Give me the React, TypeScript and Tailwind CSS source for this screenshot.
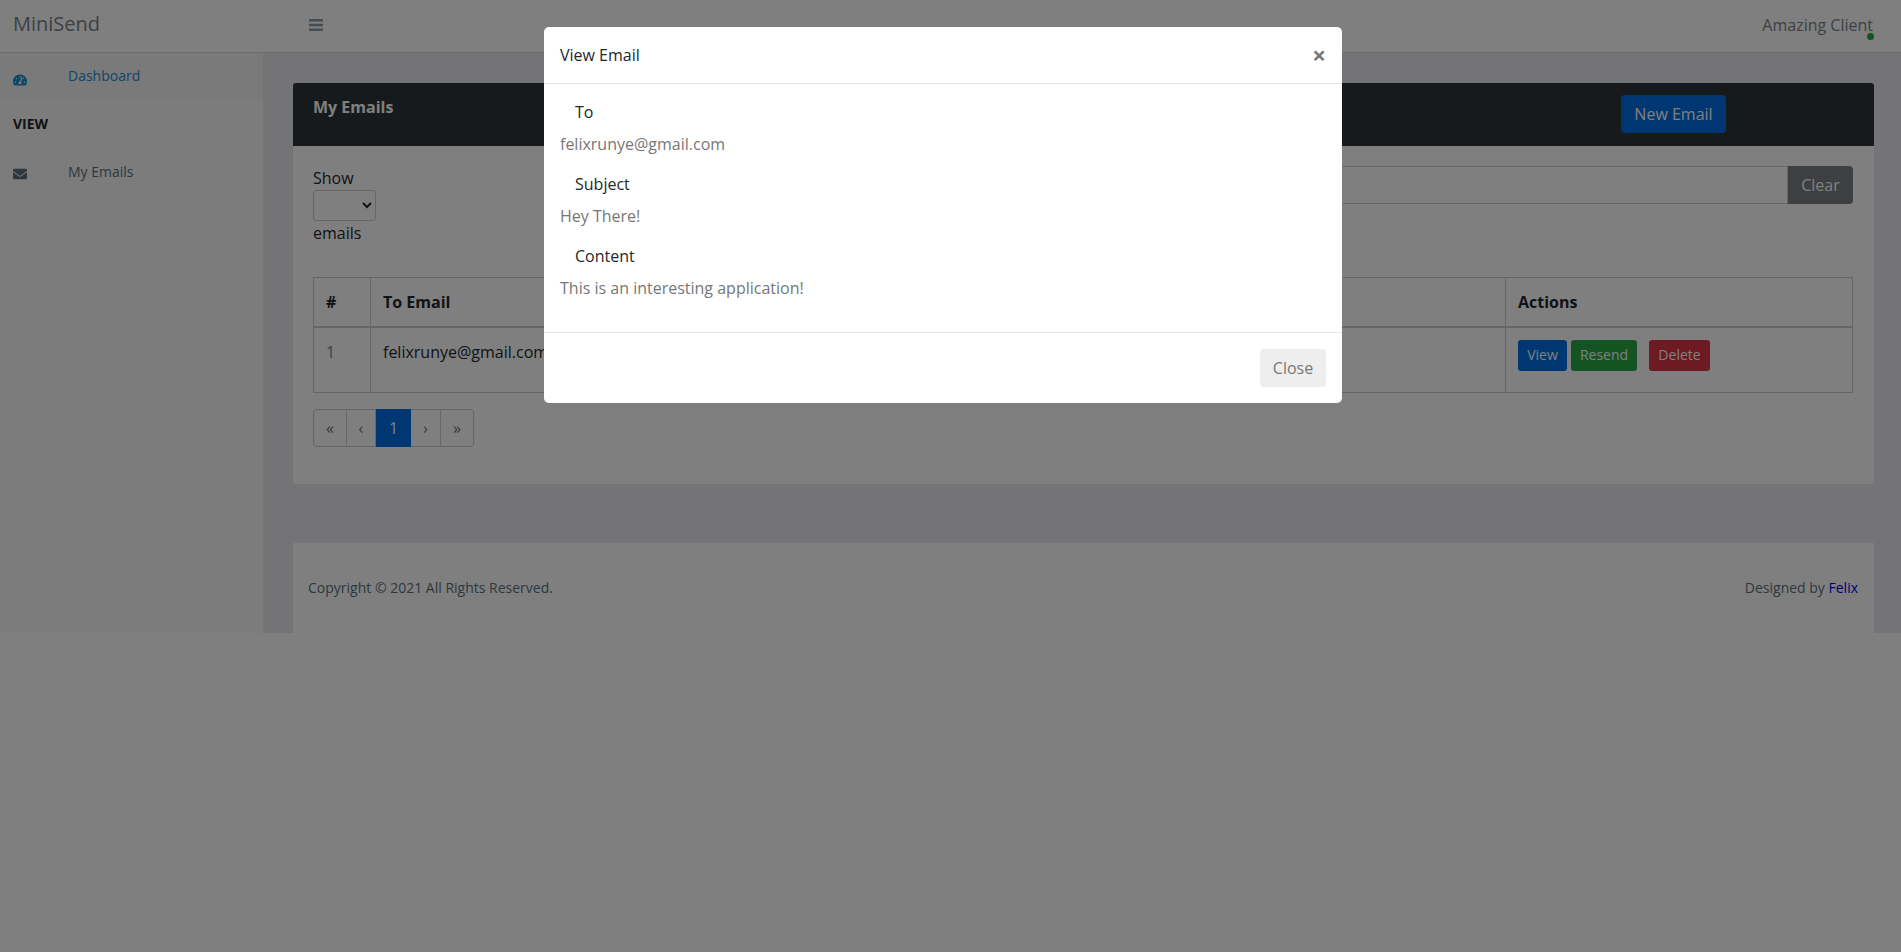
import { FaEnvelope, FaTachometerAlt } from 'react-icons/fa';

function Header() {
  return (
    <header className="flex h-[53px] items-start border-b border-[#d8dbe0] bg-white">
      <div className="mt-[10px] w-[263px] pl-[13px] text-xl text-[#7b8288]">MiniSend</div>
      <button className="mt-[19px] ml-[46px] text-[#8b98a5]">
        <svg width="14" height="12" viewBox="0 0 14 12" fill="currentColor">
          <rect y="0" width="14" height="2.4" rx="0.5" />
          <rect y="4.8" width="14" height="2.4" rx="0.5" />
          <rect y="9.6" width="14" height="2.4" rx="0.5" />
        </svg>
      </button>
      <div className="relative mt-[13px] ml-auto pr-[28px] text-base text-[#7b8288]">
        Amazing Client
        <span className="absolute top-[20px] right-[27px] h-[7px] w-[7px] rounded-full bg-[#28a745]"></span>
      </div>
    </header>
  );
}

function Sidebar() {
  return (
    <aside className="flex w-[263px] shrink-0 flex-col bg-[#f8f8f8] text-sm text-[#5c7080]">
      <div className="flex h-[46px] bg-[#f4f4f4] pl-[13px] text-[#1a8ccf]">
        <FaTachometerAlt size={14} className="mt-[20px]" />
        <span className="mt-[13px] ml-[41px]">Dashboard</span>
      </div>
      <div className="mt-[15px] pl-[13px] leading-5 font-bold text-[#23282c]">VIEW</div>
      <div className="mt-[28px] flex pl-[13px]">
        <FaEnvelope size={14} className="mt-[5px]" />
        <span className="ml-[41px]">My Emails</span>
      </div>
    </aside>
  );
}

function EmailsCard() {
  return (
    <section className="h-[401px] rounded-[3px] bg-white">
      <div className="flex h-[63px] rounded-t-[3px] bg-[#2f353a] pr-[148px] pl-[20px] text-white">
        <h2 className="mt-[12px] font-bold">My Emails</h2>
        <button className="mt-[12px] ml-auto h-[38px] w-[105px] rounded-[4px] bg-[#006fe6]">New Email</button>
      </div>
      <div className="pt-[20px] pr-[21px] pl-[20px]">
        <div className="flex h-[79px] justify-between">
          <div className="flex flex-col items-start">
            <span>Show</span>
            <select className="h-[31px] w-[63px] rounded-[3px] border border-[#c8ced3] bg-white"></select>
            <span>emails</span>
          </div>
          <div className="flex h-[38px] w-[900px]">
            <input className="flex-1 border border-[#c8ced3]" />
            <button className="w-[65px] rounded-r-[4px] bg-[#7d7e82] text-white">Clear</button>
          </div>
        </div>
        <table className="mt-[32px] w-full table-fixed border-collapse border border-[#c8ced3]">
          <colgroup>
            <col className="w-[57px]" />
            <col />
            <col className="w-[347px]" />
          </colgroup>
          <thead>
            <tr className="h-[49px] border-b-2 border-[#c8ced3] text-left">
              <th className="border-r border-[#c8ced3] px-[12px]">#</th>
              <th className="border-r border-[#c8ced3] px-[12px]">To Email</th>
              <th className="px-[12px]">Actions</th>
            </tr>
          </thead>
          <tbody>
            <tr className="h-[66px] align-top">
              <td className="border-r border-[#c8ced3] p-[12px] text-[#73818f]">1</td>
              <td className="border-r border-[#c8ced3] p-[12px] text-[#23282c]">felixrunye@gmail.com</td>
              <td className="p-[12px]">
                <div className="flex text-sm text-white">
                  <button className="h-[31px] w-[49px] rounded-[3px] bg-[#006fe6]">View</button>
                  <button className="ml-[4px] h-[31px] w-[66px] rounded-[3px] bg-[#28a745]">Resend</button>
                  <button className="ml-[12px] h-[31px] w-[61px] rounded-[3px] bg-[#dc3545]">Delete</button>
                </div>
              </td>
            </tr>
          </tbody>
        </table>
        <nav className="mt-[16px] flex h-[38px] w-[161px] text-[#6c757d]">
          <span className="flex w-[34px] items-center justify-center rounded-l-[4px] border border-[#c8ced3]">«</span>
          <span className="flex w-[29px] items-center justify-center border-y border-r border-[#c8ced3]">‹</span>
          <span className="flex w-[35px] items-center justify-center bg-[#006fe6] text-white">1</span>
          <span className="flex w-[30px] items-center justify-center border-y border-r border-[#c8ced3]">›</span>
          <span className="flex w-[33px] items-center justify-center rounded-r-[4px] border-y border-r border-[#c8ced3]">»</span>
        </nav>
      </div>
    </section>
  );
}

function Footer() {
  return (
    <footer className="mt-[59px] flex h-[90px] items-center justify-between bg-white pr-[16px] pl-[15px] text-sm text-[#5c7080]">
      <span>Copyright © 2021 All Rights Reserved.</span>
      <span>
        Designed by <a className="text-[#0000ee]">Felix</a>
      </span>
    </footer>
  );
}

function ViewEmailModal() {
  const fields = [
    { label: 'To', value: 'felixrunye@gmail.com' },
    { label: 'Subject', value: 'Hey There!' },
    { label: 'Content', value: 'This is an interesting application!' },
  ];
  return (
    <div className="fixed inset-0 bg-black/50">
      <div className="mt-[27px] ml-[544px] w-[798px] rounded-[5px] bg-white">
        <div className="flex h-[57px] items-center justify-between border-b border-[#e4e7ea] pr-[16px] pl-[16px]">
          <h5 className="text-base text-[#23282c]">View Email</h5>
          <span className="text-2xl leading-none font-bold text-[#777777]">×</span>
        </div>
        <div className="flex flex-col gap-[16px] px-[16px] pt-[16px] pb-[32px]">
          {fields.map((f) => (
            <div key={f.label} className="flex flex-col gap-[8px]">
              <label className="pl-[15px] text-[#23282c]">{f.label}</label>
              <span className="text-[#777777]">{f.value}</span>
            </div>
          ))}
        </div>
        <div className="flex h-[71px] items-center justify-end border-t border-[#e4e7ea] px-[16px]">
          <button className="h-[38px] w-[66px] rounded-[4px] bg-[#eeeeee] text-[#777777]">Close</button>
        </div>
      </div>
    </div>
  );
}

export default function App() {
  return (
    <div className="min-h-[952px] bg-white font-['Open_Sans',sans-serif] text-base text-[#23282c]">
      <Header />
      <div className="flex">
        <Sidebar />
        <main className="h-[580px] flex-1 bg-[#e9e9ed] pt-[30px] pr-[27px] pl-[30px]">
          <EmailsCard />
          <Footer />
        </main>
      </div>
      <ViewEmailModal />
    </div>
  );
}
